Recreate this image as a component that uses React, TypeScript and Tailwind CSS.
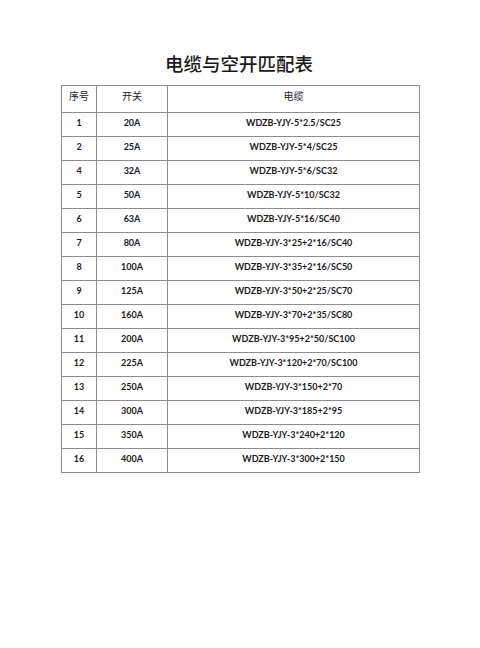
import React from "react"

const rows: [string, string, string][] = [
  ["1", "20A", "WDZB-YJY-5*2.5/SC25"],
  ["2", "25A", "WDZB-YJY-5*4/SC25"],
  ["4", "32A", "WDZB-YJY-5*6/SC32"],
  ["5", "50A", "WDZB-YJY-5*10/SC32"],
  ["6", "63A", "WDZB-YJY-5*16/SC40"],
  ["7", "80A", "WDZB-YJY-3*25+2*16/SC40"],
  ["8", "100A", "WDZB-YJY-3*35+2*16/SC50"],
  ["9", "125A", "WDZB-YJY-3*50+2*25/SC70"],
  ["10", "160A", "WDZB-YJY-3*70+2*35/SC80"],
  ["11", "200A", "WDZB-YJY-3*95+2*50/SC100"],
  ["12", "225A", "WDZB-YJY-3*120+2*70/SC100"],
  ["13", "250A", "WDZB-YJY-3*150+2*70"],
  ["14", "300A", "WDZB-YJY-3*185+2*95"],
  ["15", "350A", "WDZB-YJY-3*240+2*120"],
  ["16", "400A", "WDZB-YJY-3*300+2*150"],
]

const App = () => {
  return (
    <div className="w-[480px] h-[648px] bg-white text-[#1a1a1a] pt-[49px]">
      <h1 className="text-center text-[18.5px] leading-[28px] font-medium font-['Noto_Sans_CJK_SC',sans-serif] ml-[-2px]">
        电缆与空开匹配表
      </h1>
      <table className="mt-[8px] ml-[61px] w-[359px] table-fixed border-collapse">
        <colgroup>
          <col className="w-[35px]" />
          <col className="w-[71px]" />
          <col />
        </colgroup>
        <thead>
          <tr className="h-[27px] text-[10px] leading-[14px] font-['Noto_Sans_CJK_SC',sans-serif]">
            <th className="border border-[#8c8c8c] font-normal align-top pt-[3px]">序号</th>
            <th className="border border-[#8c8c8c] font-normal align-top pt-[3px]">开关</th>
            <th className="border border-[#8c8c8c] font-normal align-top pt-[3px]">电缆</th>
          </tr>
        </thead>
        <tbody className="text-[9px] leading-[14px] font-bold font-['Lato',sans-serif]">
          {rows.map(([no, sw, cable]) => (
            <tr key={no} className="h-[24px]">
              <td className="border border-[#8c8c8c] text-center align-top pt-[3px]">{no}</td>
              <td className="border border-[#8c8c8c] text-center align-top pt-[3px]">{sw}</td>
              <td className="border border-[#8c8c8c] text-center align-top pt-[3px]">{cable}</td>
            </tr>
          ))}
        </tbody>
      </table>
    </div>
  )
}

export default App
